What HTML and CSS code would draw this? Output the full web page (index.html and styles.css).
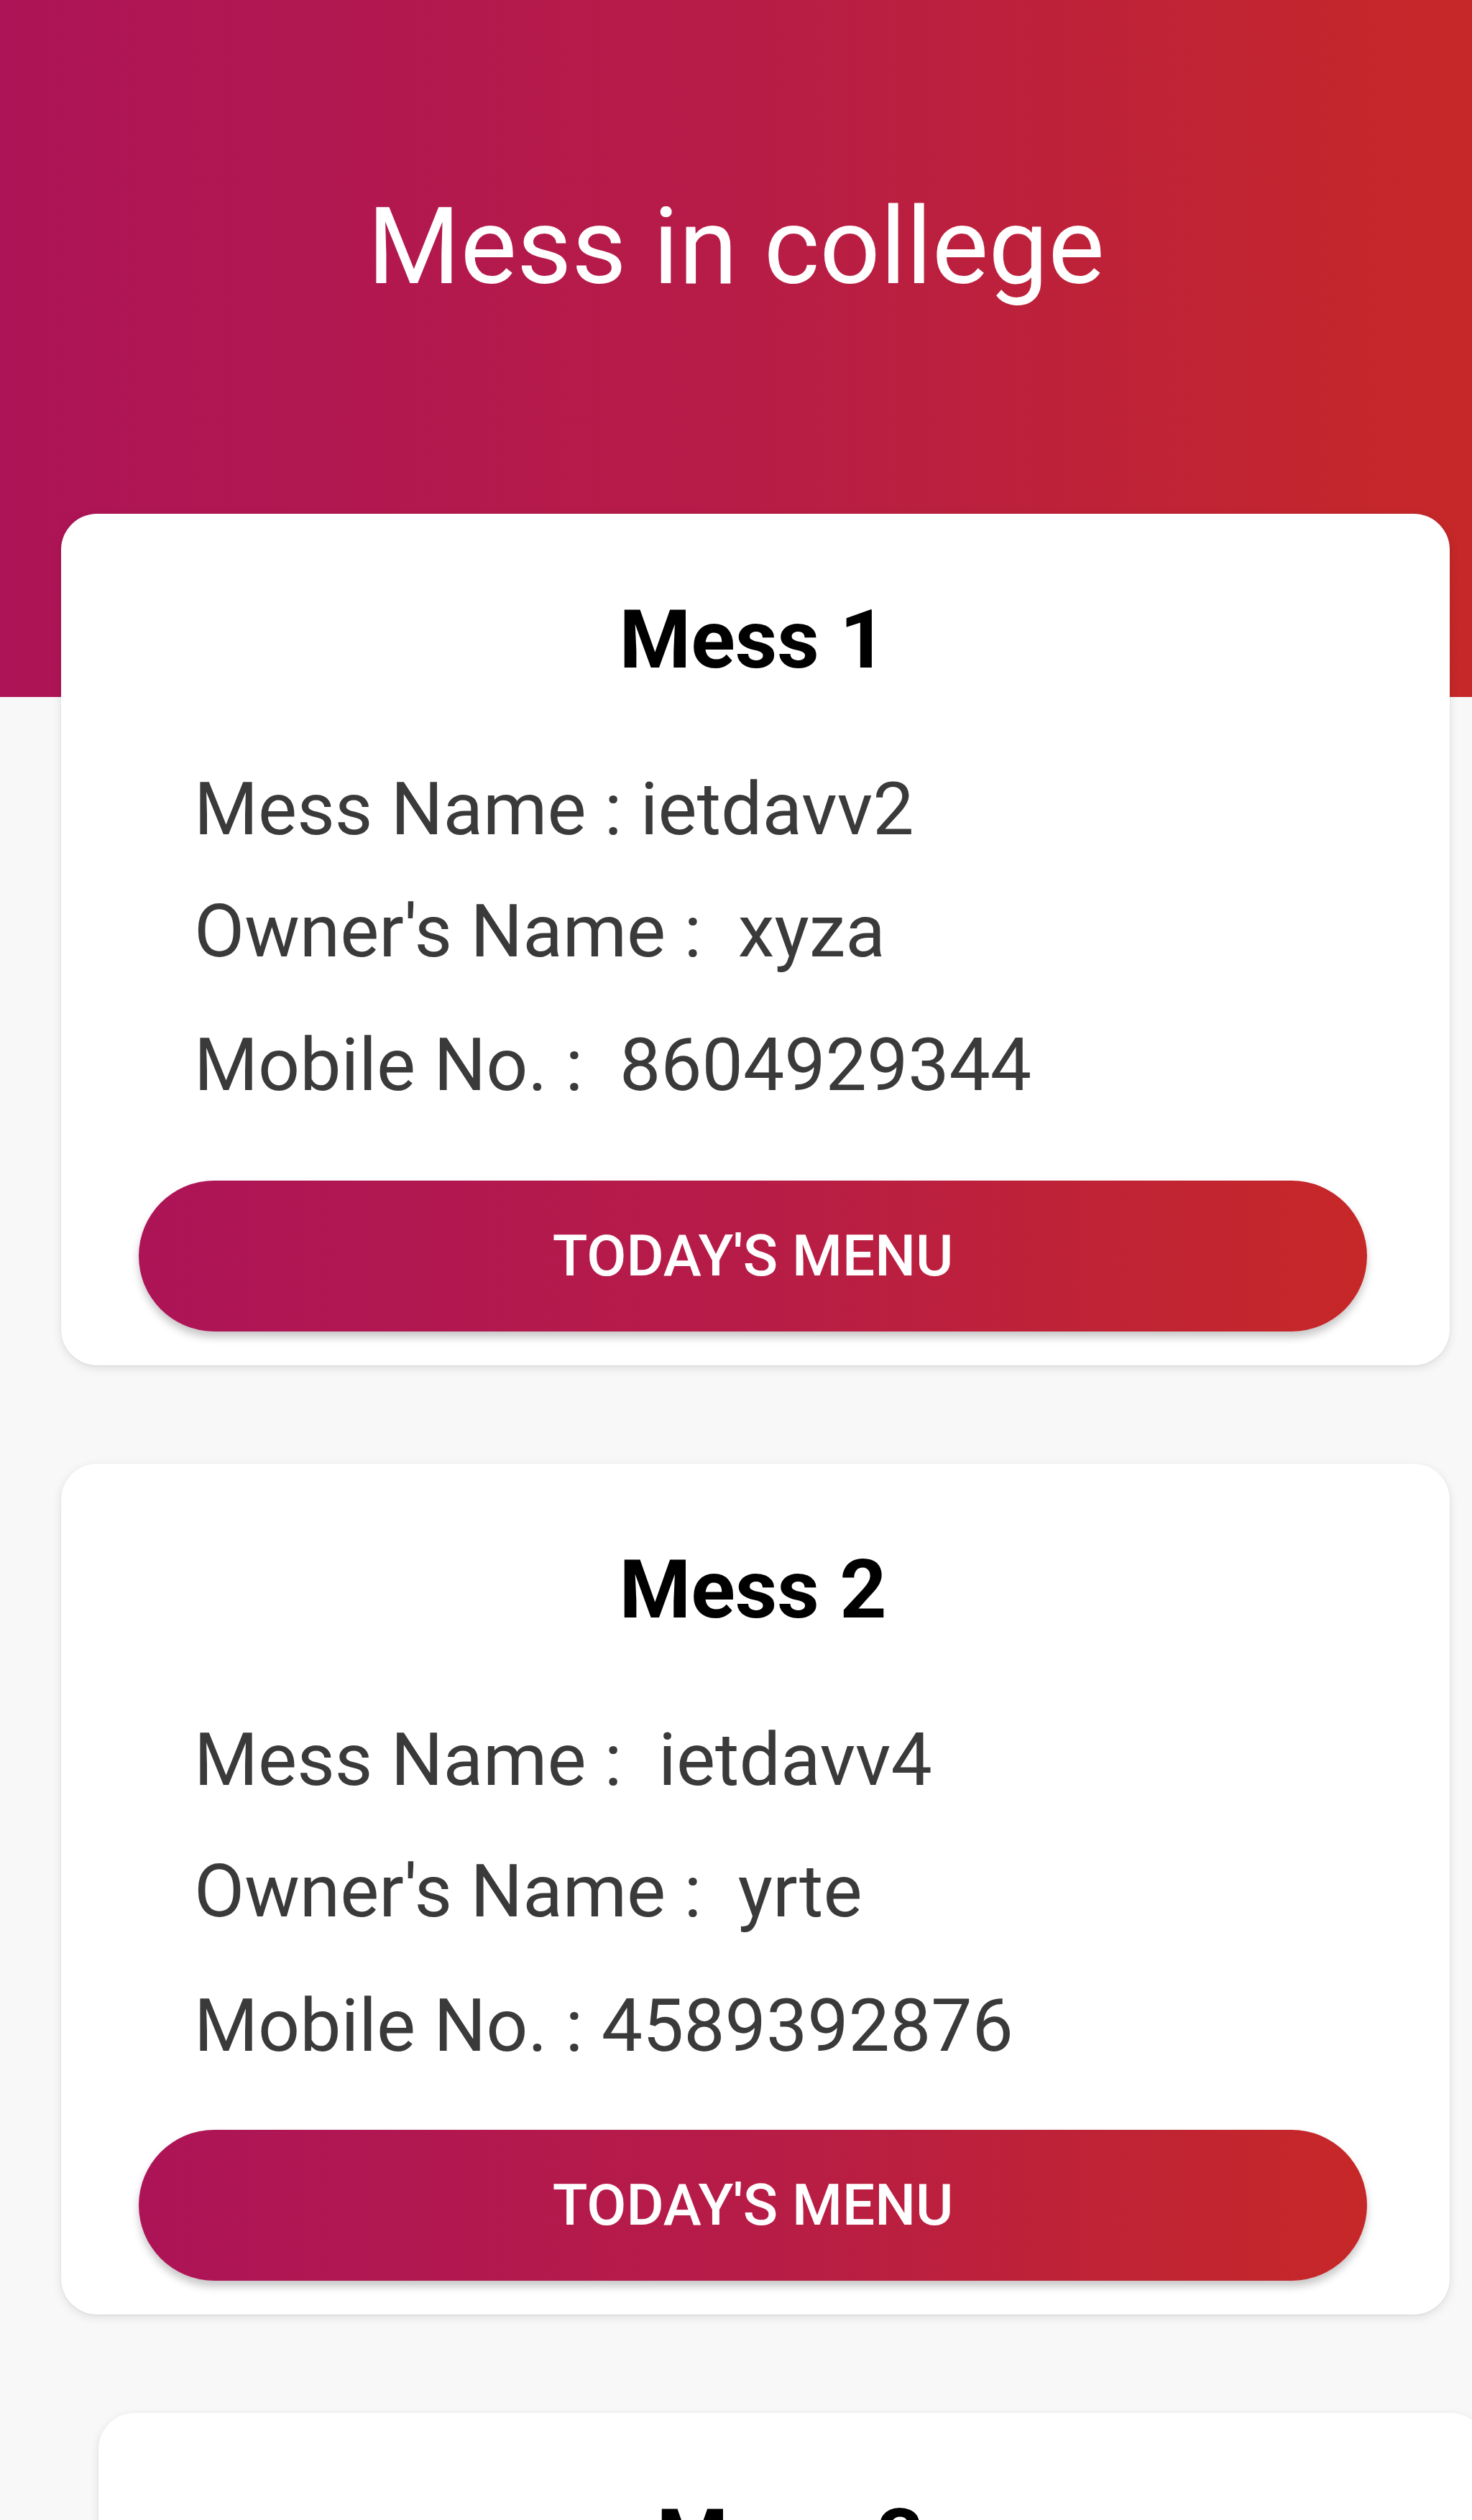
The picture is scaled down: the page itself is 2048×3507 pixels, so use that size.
FILE: index.html
```html
<!DOCTYPE html>
<html lang="en">
<head>
<meta charset="utf-8">
<title>Mess in college</title>
<link rel="stylesheet" href="styles.css">
</head>
<body>
<div class="page">
  <header class="hero">
    <h1 class="hero-title">Mess in college</h1>
  </header>
  <main class="list">
    <section class="card card--a">
      <h2 class="card-title">Mess 1</h2>
      <div class="info">
        <p class="row">Mess Name : ietdavv2</p>
        <p class="row">Owner's Name :&nbsp; xyza</p>
        <p class="row">Mobile No. :&nbsp; 8604929344</p>
      </div>
      <button class="menu-btn" type="button">TODAY'S MENU</button>
    </section>
    <section class="card card--b">
      <h2 class="card-title">Mess 2</h2>
      <div class="info">
        <p class="row">Mess Name :&nbsp; ietdavv4</p>
        <p class="row">Owner's Name :&nbsp; yrte</p>
        <p class="row">Mobile No. : 4589392876</p>
      </div>
      <button class="menu-btn" type="button">TODAY'S MENU</button>
    </section>
    <section class="card card--c">
      <h2 class="card-title">Mess 3</h2>
    </section>
  </main>
</div>
</body>
</html>
```
FILE: styles.css
```css
* {
  box-sizing: border-box;
}

html, body {
  margin: 0;
  padding: 0;
}

body {
  font-family: Roboto, "Liberation Sans", Arial, sans-serif;
  background:
    linear-gradient(to right, #ad1457 0%, #b71c47 50%, #c62828 100%) top left / 100% 970px no-repeat,
    #f8f8f8;
  overflow: hidden;
  height: 3507px;
}

.page {
  width: 2048px;
}

.hero {
  height: 715px;
  padding-top: 256px;
}

.hero-title {
  margin: 0;
  font-size: 148px;
  line-height: 175px;
  font-weight: 400;
  color: #ffffff;
  text-align: center;
}

.list {
  display: flex;
  flex-direction: column;
  gap: 137px;
}

.card {
  width: 1932px;
  margin-left: 85px;
  background: #ffffff;
  border-radius: 50px;
  box-shadow: 0 4px 14px rgba(0, 0, 0, 0.10), 0 1px 3px rgba(0, 0, 0, 0.06);
  padding: 107px 115px 47px 108px;
  display: flex;
  flex-direction: column;
}

.card--c {
  margin-left: 137px;
  height: 400px;
}

.card-title {
  margin: 0;
  font-size: 114px;
  line-height: 137px;
  font-weight: 700;
  color: #000000;
  text-align: center;
}

.info {
  margin-top: 105px;
  padding-left: 77px;
  display: flex;
  flex-direction: column;
}

.row {
  margin: 0;
  font-size: 102px;
  line-height: 124px;
  color: #3a3a3a;
  white-space: nowrap;
}

.card--a .row:nth-child(2) { margin-top: 46px; }
.card--a .row:nth-child(3) { margin-top: 62px; }
.card--a .info { margin-bottom: 99px; }

.card--b .info { margin-top: 106px; margin-bottom: 83px; }
.card--b .row:nth-child(2) { margin-top: 59px; }
.card--b .row:nth-child(3) { margin-top: 63px; }

.menu-btn {
  display: block;
  width: 100%;
  height: 210px;
  border: none;
  border-radius: 105px;
  background: linear-gradient(to right, #ad1457 0%, #b71c47 50%, #c62828 100%);
  color: #ffffff;
  font-family: Roboto, "Liberation Sans", Arial, sans-serif;
  font-size: 80px;
  font-weight: 500;
  padding: 0;
  box-shadow: 0 8px 12px rgba(0, 0, 0, 0.22);
  cursor: pointer;
}
```
